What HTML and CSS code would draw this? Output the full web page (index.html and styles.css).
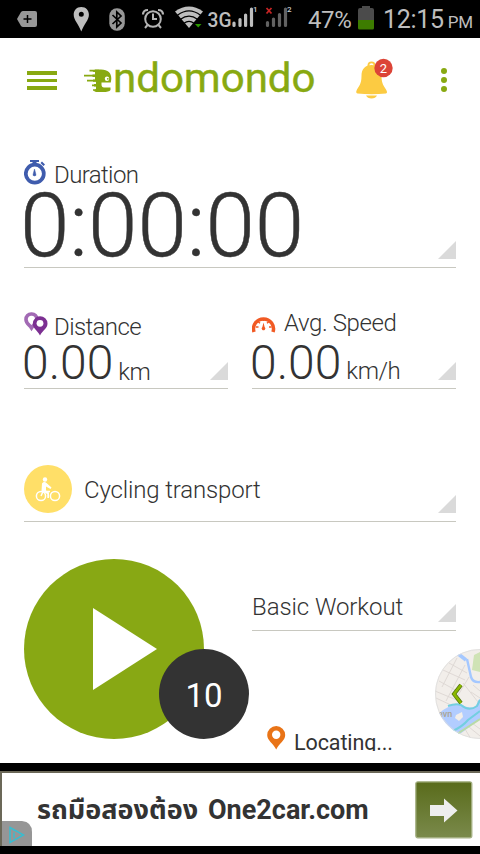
FILE: index.html
```html
<!DOCTYPE html>
<html lang="en">
<head>
<meta charset="utf-8">
<title>Endomondo</title>
<link rel="stylesheet" href="styles.css">
</head>
<body>
<div class="status">
  <svg class="status-icons" width="300" height="38" viewBox="0 0 300 38">
    <path d="M17 19L21 12Q22 11 23 11H35Q37 11 37 13V25Q37 27 35 27H23Q22 27 21 26Z" fill="#979797"/>
    <path d="M27.500 15V23M23.500 19H31.500" stroke="#000" stroke-width="1.500"/>
    <path fill-rule="evenodd" d="M81.300 7C76.500 7 73.700 10.500 73.700 14.700C73.700 20 78.500 24 81.300 31.500C84.100 24 88.900 20 88.900 14.700C88.900 10.500 86.100 7 81.300 7ZM81.300 11.800A2.500 2.500 0 1 1 81.300 16.800A2.500 2.500 0 1 1 81.300 11.800Z" fill="#bebebe"/>
    <rect x="109.300" y="8.200" width="15.500" height="22.500" rx="7.500" fill="#979797"/>
    <path d="M112.500 15L121 23L116.800 27V12L121 16L112.500 24" fill="none" stroke="#000" stroke-width="1.700"/>
    <g fill="none" stroke="#b4b4b4" stroke-width="2">
      <circle cx="153" cy="19" r="7.800"/>
      <path d="M153 13.500V19H157M147.500 25L145 28M158.500 25L161 28"/>
      <path d="M143 14.500Q143 10 148 10M158 10Q163 10 163 14.500" stroke-width="2.200"/>
    </g>
    <path d="M175 11.500Q189 1.500 203 11.500L189 28Z" fill="#bebebe"/>
    <g fill="none" stroke="#000" stroke-width="1.300"><path d="M177.500 15.200Q189 6.500 200.500 15.200M180.500 19.300Q189 13 197.500 19.300M184 23.300Q189 19.500 194 23.300"/></g>
    <path d="M195 24H201.500L198.200 27.500Z" fill="#2c9a00"/>
    <text class="net" x="207.500" y="26.500" textLength="24" lengthAdjust="spacingAndGlyphs">3G</text>
    <g stroke="#bebebe" stroke-width="3.200" stroke-linecap="round"><path d="M234 23V25.500M240 19.500V25.500M245.600 15V25.500M251.500 9V25.500"/></g>
    <g stroke="#626262" stroke-width="3.200" stroke-linecap="round"><path d="M267.500 22.500V25.500M273.500 19V25.500M279.500 14.500V25.500M285.500 9V25.500"/></g>
    <path d="M266.500 8L271.500 13.500M271.500 8L266.500 13.500" stroke="#c72424" stroke-width="1.800"/>
    <text class="sim" x="253" y="12">1</text><text class="sim" x="287" y="12">2</text>
  </svg>
  <span class="percent">47%</span>
  <svg class="battery" width="16" height="24" viewBox="0 0 16 24"><path d="M4 0H12V2H14Q16 2 16 4V14H0V4Q0 2 2 2H4Z" fill="#4b4b4b"/><path d="M0 14H16V22Q16 23.500 14.500 23.500H1.500Q0 23.500 0 22Z" fill="#3d7c00"/></svg>
  <span class="clock">12:15<small>PM</small></span>
</div>

<main class="screen">
  <header class="topbar">
    <div class="menu"><i></i><i></i><i></i></div>
    <svg class="logo" width="234" height="40" viewBox="0 0 234 40">
      <g fill="none" stroke="#88a911" stroke-width="1.700"><path d="M5.500 10.700H15M0 15.700H13M3 20.700H14M8 25.300H14M9 30H18"/></g>
      <path d="M11 9.500H17C24 9.500 27.500 13 27.300 19L26.800 22.500H17.500V24.500Q17.500 27.500 20 27.500H26.500V30Q25 32 19 32H12L9.500 30.800L12 29V26.500H10V24H12V21.800H9V19.500H11V17H8.500V14.500H11V12H8.500Z" fill="#88a911"/>
      <circle cx="23" cy="18.800" r="2.200" fill="#fff"/><circle cx="23.800" cy="18.800" r=".9" fill="#88a911"/>
      <text class="wordmark" x="29" y="31.500" textLength="202.500" lengthAdjust="spacingAndGlyphs">ndomondo</text>
    </svg>
    <svg class="bell" width="40" height="42" viewBox="0 0 40 42">
      <circle cx="15.500" cy="7.500" r="3.100" fill="none" stroke="#fccb42" stroke-width="1.800"/>
      <path d="M15.500 7C22 7 25.500 11 25.500 18C25.500 26 28 28 30 31.500Q32 35 30 35.500Q15.500 37 1.500 35.500Q-.8 35 1 31.500C3 28 5.500 26 5.500 18C5.500 11 9 7 15.500 7Z" fill="#fccb42"/>
      <path d="M10 37.500H21Q19.500 40.500 15.500 40.500T10 37.500Z" fill="#fccb42"/>
      <circle cx="27.500" cy="10" r="9.200" fill="#dc4437"/>
      <text class="count" x="27.500" y="14.500" text-anchor="middle">2</text>
    </svg>
    <div class="more"><i></i><i></i><i></i></div>
  </header>

  <section class="field duration">
    <div class="label">
      <svg width="22" height="25" viewBox="0 0 22 25"><circle cx="10.800" cy="13.700" r="9" fill="none" stroke="#3f5cad" stroke-width="3.700"/><path d="M6 0H15V2H12.500V4H8.500V2H6ZM18 1.500L21 4.500L19.500 6L16.500 3Z" fill="#3f5cad"/><path d="M10.500 9L11.800 14A1.400 1.400 0 1 1 9.200 14Z" fill="#3f5cad" stroke="#3f5cad" stroke-width=".5"/></svg>
      <span>Duration</span>
    </div>
    <div class="time">0:00:00</div>
  </section>

  <div class="pair">
    <section class="field distance">
      <div class="label">
        <svg width="24" height="24" viewBox="0 0 24 24"><path d="M7.500 2A5.200 5.200 0 0 0 2 7.500C2 11.500 5.500 13 7.500 16C9.500 13 13 11.500 13 7.500A5.200 5.200 0 0 0 7.500 2Z" fill="none" stroke="#a26ab4" stroke-width="3.600"/><path d="M16 4.200A7.400 7.400 0 0 0 8.800 11.500C8.800 16.500 13 18 16 23.500C19 18 23.500 16.500 23.500 11.500A7.400 7.400 0 0 0 16 4.200Z" fill="#7c3092"/><circle cx="16" cy="11.300" r="3.400" fill="#fff"/></svg>
        <span>Distance</span>
      </div>
      <div class="value">0.00<small>km</small></div>
    </section>
    <section class="field speed">
      <div class="label">
        <svg width="24" height="19" viewBox="0 0 24 19"><path d="M2 18A10 10 0 1 1 21 18" fill="none" stroke="#f15a24" stroke-width="3.500"/><g stroke="#f15a24" stroke-width="1.400"><path d="M4 13H6.500M17 13H19.500M6 7.500L8 9.300M17 7.500L15 9.300M11.500 4V7"/></g><path d="M11.500 8.500L12.600 13A1.800 1.800 0 1 1 10.400 13Z" fill="#f15a24"/></svg>
        <span>Avg. Speed</span>
      </div>
      <div class="value">0.00<small>km/h</small></div>
    </section>
  </div>

  <section class="field sport">
    <svg width="48" height="48" viewBox="0 0 48 48"><circle cx="24" cy="24" r="24" fill="#ffdf68"/><g fill="none" stroke="#fff" stroke-width="1.500"><circle cx="17" cy="31" r="4.600"/><circle cx="31" cy="31" r="4.600"/><path d="M17 31L19 26.500H26"/></g><circle cx="21" cy="14.500" r="2.200" fill="#fff"/><path d="M18 18.500Q20 16 22.500 18L27.500 22.500L26.500 24L22 21.500V25.500L25 27.500V33H23.300V29L17.500 26Z" fill="#fff"/></svg>
    <span>Cycling transport</span>
  </section>

  <div class="bottom">
    <div class="start">
      <svg width="180" height="180" viewBox="0 0 180 180"><circle cx="90" cy="90" r="90" fill="#88a814"/><path d="M69 49L133 90L69 131Z" fill="#fff"/></svg>
      <div class="countdown">10</div>
    </div>
    <div class="side">
      <section class="field workout"><span>Basic Workout</span></section>
      <div class="locating">
        <svg width="19" height="24" viewBox="0 0 19 24"><path fill-rule="evenodd" d="M9.200 0A9 9 0 0 0 .2 9C.2 14.500 6 17 9.200 23.500C12.400 17 18.200 14.500 18.200 9A9 9 0 0 0 9.200 0ZM9.200 4.600A4.200 4.200 0 1 1 9.200 13A4.200 4.200 0 1 1 9.200 4.600Z" fill="#e97417"/></svg>
        <span>Locating...</span>
      </div>
    </div>
    <svg class="map" width="45" height="90" viewBox="0 0 45 90">
      <defs><clipPath id="disc"><circle cx="45" cy="45" r="45"/></clipPath></defs>
      <g clip-path="url(#disc)">
        <rect width="45" height="90" fill="#f2eeea"/>
        <path d="M39 6L45 3V23L37 21Z" fill="#cfe3b5"/>
        <g fill="none" stroke="#dcd6d2" stroke-width=".9"><path d="M8 21L30 31M14 14L32 24M4 32L24 43M0 42L24 52M22 9L7 38M30 16L11 52M34 28L22 48M1 49L18 57M38 36L45 42M36 43L45 49M28 34L43 53M34 78L45 87M37 74L45 80M30 80L36 90"/></g>
        <path d="M22 4L31 11" fill="none" stroke="#a5c8ff" stroke-width="3.500"/>
        <path d="M32 10L36 28Q38 34 45 33" fill="none" stroke="#a5c8ff" stroke-width="2.400"/>
        <path d="M8 61Q17 55 25 55Q34 60 41 58Q43 50 45 50V70L21 88L10 80L0 68Z" fill="#b2cdff"/>
        <path d="M13 57Q21 54 26 56Q34 63 42 57L45 51M18 82Q28 77 33 71L45 62" fill="none" stroke="#73cfe0" stroke-width="2"/>
        <path d="M22 85L45 70" stroke="#b8dba5" stroke-width="2"/>
        <path d="M21 66L27 63L28 68L24 72L20 69Z" fill="#f2eeea"/>
        <text class="place" x="3" y="68">avn</text>
      </g>
      <circle cx="45" cy="45" r="44.500" fill="none" stroke="#ddd" stroke-width=".8"/>
      <path d="M26 36L19 45L26 54" fill="none" stroke="#50720f" stroke-width="4"/><path d="M26 36L19 45L26 54" fill="none" stroke="#8cb800" stroke-width="2.600"/>
    </svg>
  </div>
</main>

<div class="ad">
  <span class="ad-text" lang="th"><span class="thai">รถมือสองต้อง</span><span class="domain">One2car.com</span></span>
  <svg class="go" width="58" height="58" viewBox="0 0 58 58"><defs><linearGradient id="g" x2="0" y2="1"><stop stop-color="#596b1b"/><stop offset="1" stop-color="#7a8a4b"/></linearGradient></defs><rect x=".8" y=".8" width="56" height="56" rx="2" fill="url(#g)" stroke="#a5b184" stroke-width="1.300"/><path d="M15 24H29V17.500L42.500 29.500L29 41.500V35H15Z" fill="#eee"/></svg>
  <svg class="choices" width="30" height="25" viewBox="0 0 30 25"><path d="M0 0H20Q30 1 30 11V25H0Z" fill="#969696"/><path d="M8 6.500L21.500 14L8 21.500ZM12 11.500V17M12 9V10" fill="none" stroke="#38bdd0" stroke-width="1.500"/></svg>
</div>
</body>
</html>
```

FILE: styles.css
```css
* { box-sizing: border-box; }
body {
  margin: 0;
  width: 480px;
  height: 854px;
  overflow: hidden;
  background: #000;
  color: #333;
  font-family: Roboto, "Liberation Sans", sans-serif;
  font-weight: 300;
}
svg { display: block; flex: none; }
small { font-size: inherit; }

.status { display: flex; height: 38px; color: #bebebe; font-weight: 400; }
.net { fill: #bebebe; font: 500 20px Roboto, sans-serif; }
.sim { fill: #ccc; font: 500 8px Roboto, sans-serif; }
.percent { width: 58px; padding-left: 8px; font-size: 24px; letter-spacing: -0.4px; line-height: 40px; white-space: nowrap; }
.battery { margin-top: 6px; }
.clock { padding-left: 9px; font-size: 25px; letter-spacing: -0.3px; line-height: 40px; white-space: nowrap; }
.clock small { margin-left: 4px; font-size: 17px; }

.screen { height: 725px; background: #fff; overflow: hidden; }
.topbar { display: flex; height: 84px; }
.menu { display: grid; gap: 4px; align-content: start; width: 30px; margin: 33px 27px 0 27px; }
.menu i { height: 3.5px; background: #88a911; }
.logo { margin-top: 22px; }
.wordmark { fill: #88a911; stroke: #88a911; stroke-width: 0.4px; font: 400 41px Roboto, sans-serif; }
.bell { margin: 20px 0 0 38px; }
.count { fill: #fff; font: 400 13px Roboto, sans-serif; }
.more { display: grid; gap: 3px; align-content: start; margin: 30px 0 0 45px; }
.more i { width: 6px; height: 6px; border-radius: 50%; background: #88a911; }

.field { position: relative; border-bottom: 1px solid #c8c8c0; }
.field::after {
  content: "";
  position: absolute;
  right: 0;
  bottom: 8px;
  width: 18px;
  height: 18px;
  background: #dadada;
  clip-path: polygon(100% 0, 100% 100%, 0 100%);
}
.label { display: flex; height: 28px; font-size: 24px; letter-spacing: -0.6px; line-height: 28px; white-space: nowrap; }
.label span { margin-left: 6px; }
.duration { margin: 39px 24px 0; height: 107px; }
.duration .label svg { margin: -1px 2px 0 0; }
.time { margin: -3px 0 0 -4px; font-size: 89px; letter-spacing: 0; line-height: 80px; white-space: nowrap; -webkit-text-stroke: 0.5px #333; }
.pair { display: grid; grid-template-columns: 204px 204px; gap: 24px; height: 121px; margin: 0 24px; }
.distance { padding-top: 45px; }
.distance .label svg { margin-top: -1px; }
.speed { padding-top: 41px; }
.speed .label svg { margin-top: 5px; }
.speed .label span { margin-left: 8px; letter-spacing: -0.4px; }
.value { height: 46px; margin: -1px 0 0 -2px; font-size: 48px; line-height: 46px; white-space: nowrap; }
.value small { position: relative; top: 1px; margin-left: 5px; font-size: 24px; letter-spacing: -0.6px; }
.speed .value { margin-top: 3px; }
.speed .value small { top: 0; letter-spacing: -0.5px; }
.sport { display: flex; gap: 12px; height: 57px; margin: 76px 24px 0; font-size: 24px; letter-spacing: -0.15px; line-height: 50px; }

.bottom { display: flex; height: 241px; padding: 37px 0 0 24px; }
.start { position: relative; width: 228px; height: 180px; }
.countdown {
  position: absolute;
  left: 135px;
  top: 90px;
  width: 90px;
  height: 90px;
  border-radius: 50%;
  background: #333;
  color: #fff;
  font-size: 33px;
  font-weight: 400;
  line-height: 94px;
  text-align: center;
}
.side { width: 183px; }
.workout { width: 204px; height: 72px; font-size: 24px; letter-spacing: -0.08px; line-height: 96px; }
.locating { display: flex; gap: 8px; height: 25px; margin: 95px 0 0 15px; overflow: hidden; font-size: 21.5px; font-weight: 400; letter-spacing: -0.1px; line-height: 34px; }
.map { margin-top: 90px; }
.place { fill: #aaa391; font: 500 9px Roboto, sans-serif; }

.ad { position: relative; display: flex; height: 75px; margin-top: 8px; border: solid #6b6858; border-width: 2px 0 0 2px; background: #fff; }
.ad-text { display: flex; width: 413px; padding-left: 35px; font-size: 27px; font-weight: 700; line-height: 75px; white-space: nowrap; }
.thai { width: 171px; font-family: Roboto, "Noto Sans Thai", "Noto Sans", sans-serif; }
.go { margin-top: 8px; }
.choices { position: absolute; left: 0; bottom: 0; }
```
